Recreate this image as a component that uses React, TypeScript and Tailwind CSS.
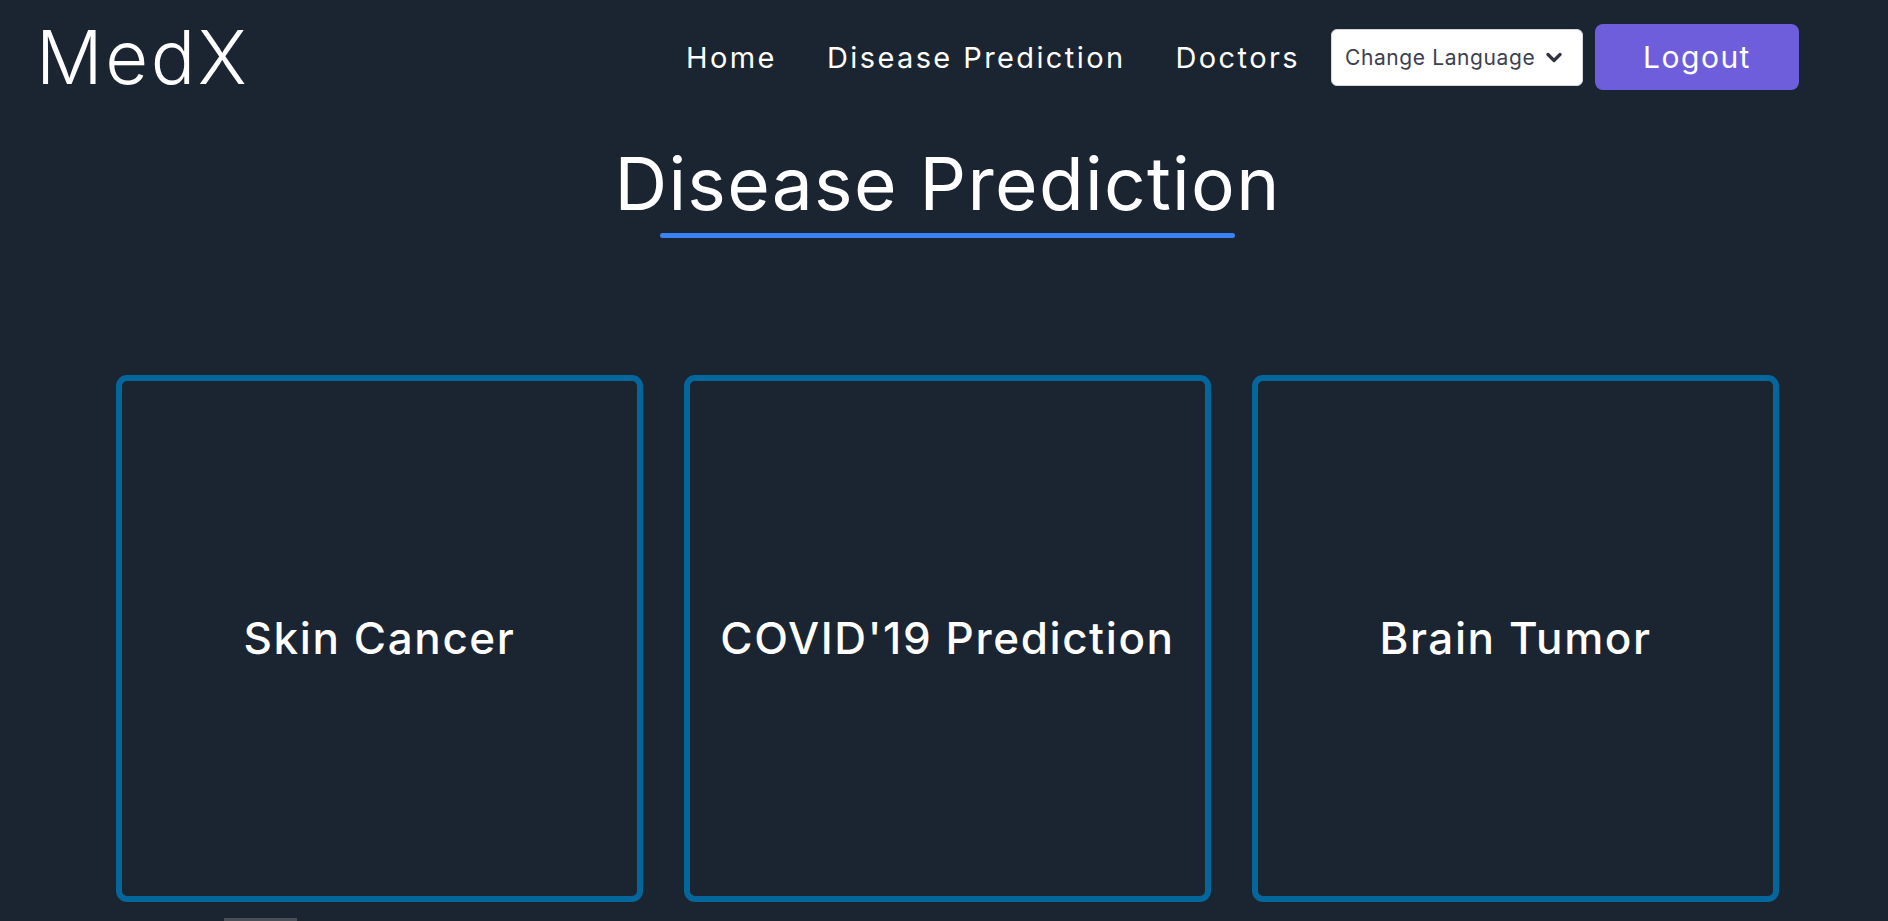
import React from "react";

const F = { fontFamily: "Inter, 'Noto Sans', 'DejaVu Sans', sans-serif" };

function Card({ label }: { label: string }) {
  return (
    <div className="w-[527px] h-[527px] shrink-0 rounded-[11px] border-[6px] border-[#04679c] flex items-center justify-center">
      <span className="text-[44px] font-medium text-white tracking-[1.6px] leading-none -mt-[2px]">{label}</span>
    </div>
  );
}

export default function App() {
  return (
    <div className="h-[921px] w-full overflow-hidden bg-[#1b2431] text-white" style={F}>
      <header className="h-[114px] flex items-center pl-[36px] pr-[89px]">
        <div className="text-[74px] font-light leading-none tracking-[2.6px]">MedX</div>
        <nav className="ml-auto flex items-center">
          <div className="flex items-center gap-[50px] text-[29px] leading-none tracking-[2.4px]">
            <a className="text-white">Home</a>
            <a className="text-white">Disease Prediction</a>
            <a className="text-white">Doctors</a>
          </div>
          <div className="ml-[31px] w-[252px] h-[57px] bg-white rounded-[6px] border border-[#d4d7dc] flex items-center pl-[13px] pr-[20px] text-[#3b4150] text-[21px] tracking-[0.6px]">
            <span className="leading-none">Change Language</span>
            <svg className="ml-auto" width="16" height="11" viewBox="0 0 16 11">
              <path d="M2 2.5 L8 8.5 L14 2.5" fill="none" stroke="#2f3440" strokeWidth="3.2" strokeLinecap="round" strokeLinejoin="round" />
            </svg>
          </div>
          <button className="ml-[12px] w-[204px] h-[66px] rounded-[8px] bg-[#6e5edc] text-white text-[30px] leading-none tracking-[1.5px]">
            Logout
          </button>
        </nav>
      </header>

      <main className="flex flex-col items-center pl-[7px]">
        <h1 className="mt-[33px] text-[73px] leading-none font-normal tracking-[1.3px]">Disease Prediction</h1>
        <div className="mt-[13px] w-[575px] h-[5px] rounded-full bg-[#3b82f6]" />
        <div className="mt-[137px] flex gap-[41px]">
          <Card label="Skin Cancer" />
          <Card label="COVID'19 Prediction" />
          <Card label="Brain Tumor" />
        </div>
        <div className="self-start ml-[217px] mt-[16px] w-[73px] h-[10px] bg-[#4a4f57]" />
      </main>
    </div>
  );
}
